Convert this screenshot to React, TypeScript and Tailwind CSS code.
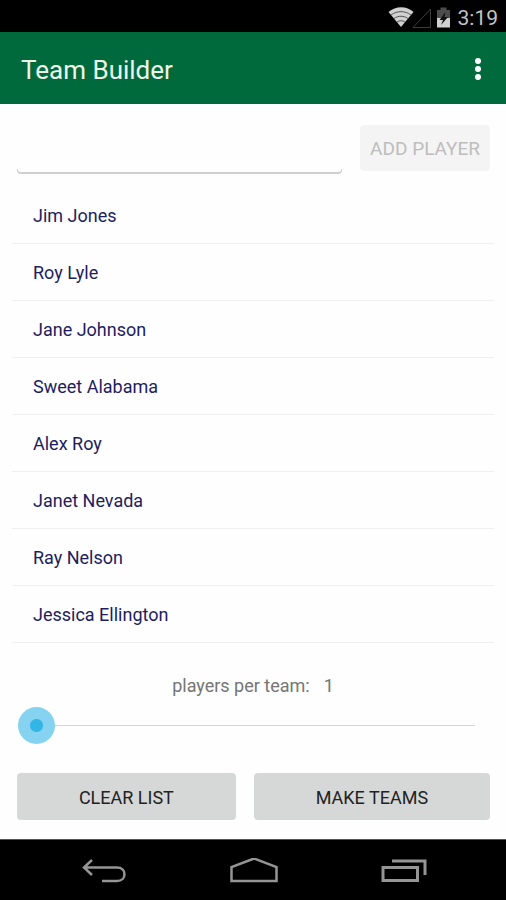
import { useState } from "react";

const initialPlayers = [
  "Jim Jones",
  "Roy Lyle",
  "Jane Johnson",
  "Sweet Alabama",
  "Alex Roy",
  "Janet Nevada",
  "Ray Nelson",
  "Jessica Ellington",
];

function StatusBar() {
  return (
    <div className="flex h-8 items-center justify-end gap-2 bg-black pt-1 pr-2 text-[#c4c4c4]">
      <svg className="h-6 w-[62px]" viewBox="0 0 62 24" fill="none" aria-hidden="true">
        <path d="M0.5 6C7.5 -0.5 19 -0.5 25.5 6L13 21Z" fill="#d0d0d0" />
        <path d="M3 9C9 4.500 17 4.500 23 9M6 12.500C10 9.500 16 9.500 20 12.500M9 16C11.500 14.300 14.500 14.300 17 16" stroke="#555" strokeWidth="1" />
        <path d="M25 21.500L42.500 3V21.500Z" stroke="#3c3c3c" strokeWidth="1" />
        <path d="M49 4H52.500V1.500H58.500V4H62V12H49Z" fill="#4c4c4c" />
        <path d="M49 12H62V21.500H49Z" fill="#d0d0d0" />
        <path d="M57.500 6L51.500 14H55L53 19L60 11H56.500Z" fill="#111" />
      </svg>
      <span className="text-[21px] leading-6">3:19</span>
    </div>
  );
}

function Header() {
  return (
    <header className="flex h-[72px] items-center justify-between bg-[#006a3c] pt-1 pr-3 pl-[21px]">
      <h1 className="text-[26px] leading-8 text-[#eef5ea]">Team Builder</h1>
      <button type="button" aria-label="More options" className="flex h-12 w-8 items-center justify-center">
        <svg className="h-6 w-2" viewBox="0 0 8 24" fill="#fff" aria-hidden="true">
          <circle cx="4" cy="3" r="3" />
          <circle cx="4" cy="11" r="3" />
          <circle cx="4" cy="19" r="3" />
        </svg>
      </button>
    </header>
  );
}

function NavBar() {
  return (
    <nav className="flex h-[61px] items-center justify-center gap-[102px] border-t border-[#555] bg-black pt-1 pl-[2px]">
      <button type="button" aria-label="Back">
        <svg className="h-7 w-12" viewBox="0 0 48 28" fill="none" stroke="#959595" strokeWidth="2.500" aria-hidden="true">
          <path d="M12 2L4 9.500L12 17M4 9.500H37C47 9.500 47 23 37 23H22" />
        </svg>
      </button>
      <button type="button" aria-label="Home">
        <svg className="h-7 w-12" viewBox="0 0 48 28" fill="none" stroke="#959595" strokeWidth="2.500" aria-hidden="true">
          <path d="M1.500 23V9L24 0.500L46.500 9V23Z" />
        </svg>
      </button>
      <button type="button" aria-label="Recent apps">
        <svg className="h-7 w-12" viewBox="0 0 48 28" fill="none" stroke="#959595" strokeWidth="3" aria-hidden="true">
          <path d="M3 9.500H37.500V22.500H3Z" />
          <path d="M12 3H45V17" />
        </svg>
      </button>
    </nav>
  );
}

export default function App() {
  const [name, setName] = useState("");
  const [players, setPlayers] = useState(initialPlayers);
  const [perTeam, setPerTeam] = useState(1);

  const addPlayer = () => {
    setPlayers([...players, name.trim()]);
    setName("");
  };

  return (
    <div className="flex min-h-screen flex-col bg-[#fefefe] font-['Roboto','Liberation_Sans',sans-serif]">
      <StatusBar />
      <Header />
      <main className="flex flex-1 flex-col">
        <div className="flex items-start gap-[18px] pt-[21px] pr-4 pl-[17px]">
          <div className="min-w-0 flex-1">
            <input
              type="text"
              aria-label="Player name"
              value={name}
              onChange={(e) => setName(e.target.value)}
              className="block h-11 w-full bg-transparent px-2 text-lg text-[#1d1d60] outline-none"
            />
            <div className="h-[5px] rounded-b-sm border-x border-b-2 border-[#cfcfcf]" />
          </div>
          <button
            type="button"
            disabled={!name.trim()}
            onClick={addPlayer}
            className="h-[46px] rounded-sm bg-[#f4f4f4] px-[10px] pt-[2px] text-[19px] text-[#bdbdbd]"
          >
            ADD PLAYER
          </button>
        </div>
        <ul className="mt-[13px] px-3">
          {players.map((player, i) => (
            <li key={i} className="flex h-[57px] items-center border-b border-[#f0f0f0] px-[21px] text-[18px] text-[#1d1d60]">
              {player}
            </li>
          ))}
        </ul>
        <div className="mt-auto flex justify-center gap-[14px] text-[18px] leading-6 text-[#757575]">
          <label htmlFor="per-team">players per team:</label>
          <output htmlFor="per-team">{perTeam}</output>
        </div>
        <div className="mt-[7px] flex pr-[13px] pl-[18px]">
          <input
            id="per-team"
            type="range"
            min={1}
            max={8}
            value={perTeam}
            onChange={(e) => setPerTeam(Number(e.target.value))}
            className="h-10 w-full appearance-none bg-[linear-gradient(#d6d6d6,#d6d6d6)] bg-[length:calc(100%_-_36px)_1px] bg-center bg-no-repeat outline-none [&::-webkit-slider-thumb]:h-[37px] [&::-webkit-slider-thumb]:w-[37px] [&::-webkit-slider-thumb]:appearance-none [&::-webkit-slider-thumb]:rounded-full [&::-webkit-slider-thumb]:bg-[radial-gradient(circle,#33b5e5_6px,#85d3f0_7px)]"
          />
        </div>
        <div className="mt-7 mb-[19px] flex gap-[18px] pr-4 pl-[17px]">
          <button
            type="button"
            onClick={() => setPlayers([])}
            className="h-[47px] flex-auto rounded-sm bg-[#d6d7d7] pt-[2px] text-[18px] text-[#222]"
          >
            CLEAR LIST
          </button>
          <button type="button" className="h-[47px] flex-auto rounded-sm bg-[#d6d7d7] pt-[2px] text-[18px] text-[#222]">
            MAKE TEAMS
          </button>
        </div>
      </main>
      <NavBar />
    </div>
  );
}
